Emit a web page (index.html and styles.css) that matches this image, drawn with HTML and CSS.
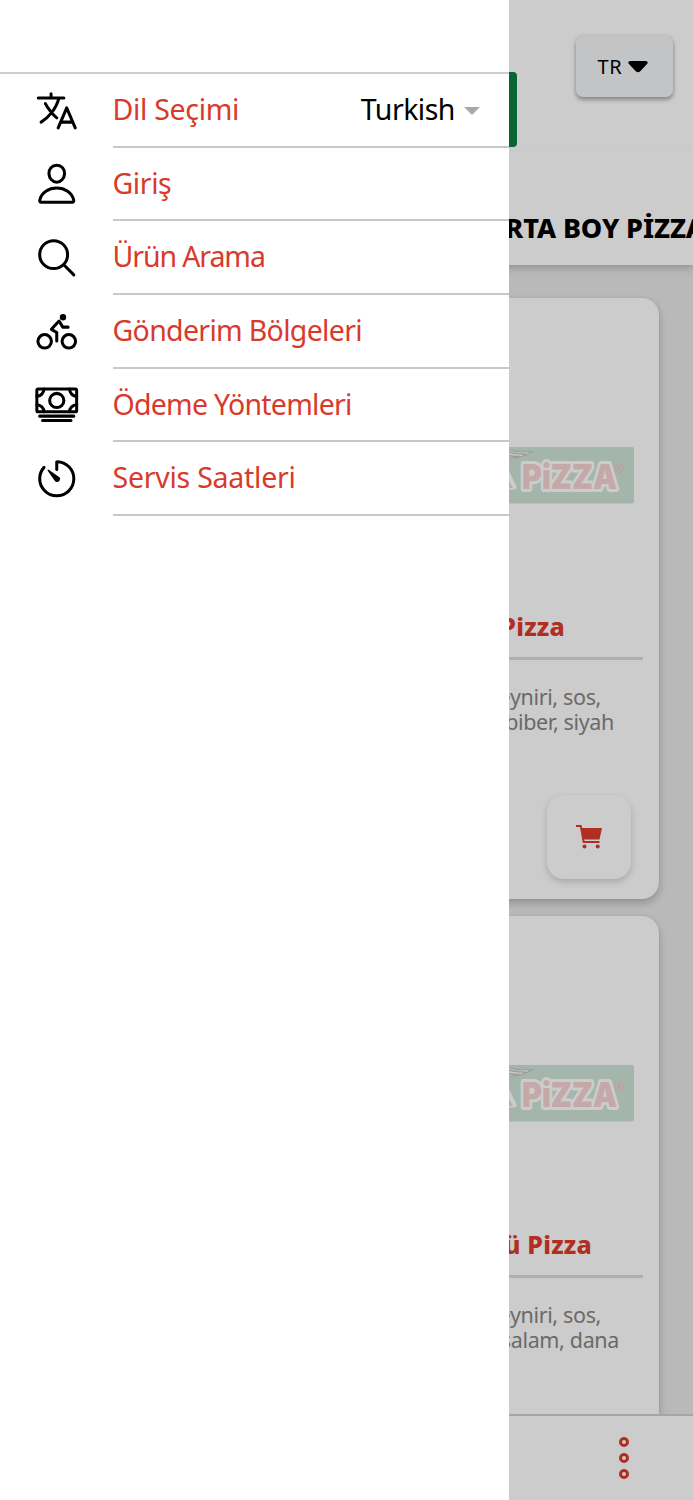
FILE: index.html
```html
<!DOCTYPE html>
<html lang="tr">
<head>
<meta charset="utf-8">
<title>Menü</title>
<link rel="stylesheet" href="styles.css">
</head>
<body>
<div class="app">
  <div class="page">
    <header class="header">
      <div class="brand"></div>
      <button class="lang">TR <svg width="20" height="12" viewBox="0 0 20 12"><path d="M2 0h16q3 1 1 3l-7 7.500q-2 1.500-4 0L1 3Q-1 1 2 0z"/></svg></button>
    </header>
    <nav class="tabs"><span>ORTA BOY PİZZALAR</span></nav>
    <main class="list">
      <article class="card">
        <div class="photo"><svg class="logo" width="134" height="57" viewBox="0 0 134 57"><rect class="logo-bg" x="-10" width="144" height="56.500" rx="2"/><path class="logo-out" d="M-4 13H1L14 40H-4z"/><path class="logo-in" d="M-4 17H0L13 41H-4z"/><path class="wing" d="M0 0H5Q13 6 32 4.500Q20 13 0 11M0 2Q13 8 26 7M0 6Q13 11 20 9"/><text class="logo-text" x="22" y="42" textLength="95" lengthAdjust="spacingAndGlyphs">PiZZA</text><text class="reg" x="114" y="26">®</text></svg></div>
        <h2 class="t1">Pizza</h2>
        <p><span class="a">eyniri, sos,</span><span class="b">biber, siyah</span></p>
        <div class="cart"><svg width="26" height="24" viewBox="0 0 26 24"><path d="M0 0h5.500l.7 3H26l-2.500 11.500H8.200l.3 1.500h15v2H6.800L4 2H0z"/><circle cx="8.500" cy="21.500" r="2"/><circle cx="21.700" cy="21.500" r="2"/></svg></div>
      </article>
      <article class="card">
        <div class="photo"><svg class="logo" width="134" height="57" viewBox="0 0 134 57"><rect class="logo-bg" x="-10" width="144" height="56.500" rx="2"/><path class="logo-out" d="M-4 13H1L14 40H-4z"/><path class="logo-in" d="M-4 17H0L13 41H-4z"/><path class="wing" d="M0 0H5Q13 6 32 4.500Q20 13 0 11M0 2Q13 8 26 7M0 6Q13 11 20 9"/><text class="logo-text" x="22" y="42" textLength="95" lengthAdjust="spacingAndGlyphs">PiZZA</text><text class="reg" x="114" y="26">®</text></svg></div>
        <h2 class="t2">ü Pizza</h2>
        <p><span class="a">eyniri, sos,</span><span class="c">salam, dana</span></p>
      </article>
    </main>
    <footer class="bottom"><i></i><i></i><i></i></footer>
  </div>
  <div class="shade"></div>
  <aside class="drawer">
    <div class="row">
      <svg class="icon" viewBox="0 0 512 512"><path d="M48 112h288M192 64v48M272 448l96-224 96 224M301.500 384h133M281.300 112S257 206 199 277 80 384 80 384M256 336s-35-27-72-75-56-85-56-85"/></svg>
      <div class="label"><span class="w1">Dil Seçimi</span><span class="value">Turkish</span><b class="caret"></b></div>
    </div>
    <div class="row">
      <svg class="icon" viewBox="0 0 512 512"><path d="M344 144c-3.920 52.870-44 96-88 96s-84.150-43.120-88-96c-4-55 35-96 88-96s92 42 88 96zM256 304c-87 0-175.300 48-191.640 138.600C62.390 453.520 68.570 464 80 464h352c11.440 0 17.620-10.480 15.650-21.400C431.300 352 343 304 256 304z"/></svg>
      <div class="label"><span class="w2">Giriş</span></div>
    </div>
    <div class="row">
      <svg class="icon" viewBox="0 0 512 512"><circle cx="221" cy="221" r="157"/><path d="M338 338L448 448"/></svg>
      <div class="label"><span class="w3">Ürün Arama</span></div>
    </div>
    <div class="row">
      <svg class="icon" viewBox="0 0 512 512"><circle cx="392" cy="364" r="76"/><circle cx="120" cy="364" r="76"/><path d="M256 360V264L196 229L282 135L324 204H384"/><circle class="solid" cx="326" cy="93" r="36"/></svg>
      <div class="label"><span class="w4">Gönderim Bölgeleri</span></div>
    </div>
    <div class="row">
      <svg class="icon" viewBox="0 0 512 512"><rect x="32" y="80" width="448" height="256" rx="16"/><path d="M64 384h384M96 432h320M480 160a80 80 0 01-80-80M32 160a80 80 0 0080-80M480 256a80 80 0 00-80 80M32 256a80 80 0 0180 80"/><circle cx="256" cy="208" r="80"/></svg>
      <div class="label"><span class="w5">Ödeme Yöntemleri</span></div>
    </div>
    <div class="row">
      <svg class="icon" viewBox="0 0 512 512"><path d="M112.910 128A191.850 191.850 0 0064 254c-1.180 106.350 85.650 193.800 192 194 106.200.2 192-85.830 192-192 0-104.540-83.550-189.610-187.500-192a4.360 4.360 0 00-4.500 4.370V152"/><path class="solid" d="M233.380 278.630l-79-113a8.130 8.130 0 0111.320-11.320l113 79a32.500 32.500 0 01-37.250 53.260 33.210 33.210 0 01-8.070-7.940z"/></svg>
      <div class="label"><span class="w6">Servis Saatleri</span></div>
    </div>
  </aside>
</div>
</body>
</html>
```
FILE: styles.css
```css
* { box-sizing: border-box; }
body { margin: 0; font-family: "Noto Sans", "Open Sans", sans-serif; }
.app { position: relative; width: 693px; height: 1500px; overflow: hidden; }
.page { height: 1500px; display: flex; flex-direction: column; background: #e8e8e8; }
.header { height: 152px; flex: none; display: flex; background: #fff; border-bottom: 1px solid #fcfcfc; position: relative; z-index: 1; }
.brand { width: 339px; height: 75px; margin: 72px 59px 0 178px; border-radius: 4px; background: #0a7d3f; }
.lang { width: 97px; height: 61px; margin: 36px 0 0; padding: 0 4px 0 0; border: 0; border-radius: 7px; background: #f4f5f8; box-shadow: 0 3px 4px rgba(0,0,0,.3), 0 0 4px rgba(0,0,0,.12); font: 20px "Noto Sans", sans-serif; letter-spacing: .8px; color: #000; display: flex; align-items: center; justify-content: center; gap: 5px; }
.tabs { height: 113px; flex: none; padding: 56px 0 0 484px; background: #fff; box-shadow: 0 2px 9px rgba(0,0,0,.25); font-size: 27px; font-weight: 800; line-height: 40px; letter-spacing: -.1px; white-space: nowrap; overflow: hidden; position: relative; }
.list { flex: 1; min-height: 0; overflow: hidden; padding: 33px 34px 0; display: flex; flex-direction: column; gap: 17px; }
.card { height: 601px; flex: none; background: #fff; border-radius: 17px; box-shadow: 0 4px 9px rgba(0,0,0,.22), 0 0 3px rgba(0,0,0,.06); display: flex; flex-direction: column; }
.photo { height: 299px; flex: none; padding: 149px 25px 0 0; display: flex; justify-content: flex-end; align-items: flex-start; }
.logo { overflow: hidden; display: block; }
.logo-bg { fill: #cee4d7; }
.logo-out { fill: #fff; stroke: #fff; stroke-width: 5; stroke-linejoin: round; }
.logo-in { fill: #f7d2d2; }
.wing { fill: #fff; stroke: #c4c4c4; stroke-width: 1.200; }
.logo-text { font: 900 34px Inter, sans-serif; fill: #f7d2d2; stroke: #fff; stroke-width: 6; paint-order: stroke; stroke-linejoin: round; }
.reg { font: 13px "Noto Sans", sans-serif; fill: #f0c4c4; }
h2 { height: 63px; margin: 0 16px 0 17px; border-bottom: 3px solid #dedbd9; color: #dc3a2b; font-size: 25px; font-weight: 800; line-height: 59px; letter-spacing: .2px; text-align: right; flex: none; }
.t1 { padding-right: 78px; }
.t2 { padding-right: 51px; }
p { margin: 24px 0 0; display: flex; flex-direction: column; color: #858585; font-size: 21.500px; line-height: 25px; letter-spacing: -.35px; text-align: right; white-space: nowrap; }
.a { padding-right: 58px; }
.b { padding-right: 45px; }
.c { padding-right: 40px; }
.cart { width: 84px; height: 84px; margin: auto 28px 20px auto; border-radius: 17px; box-shadow: 0 3px 7px rgba(0,0,0,.18); display: flex; align-items: center; justify-content: center; fill: #dc3a2b; }
.bottom { height: 86px; flex: none; padding: 21px 0 0 619px; background: #fff; border-top: 2px solid #cfcfcf; display: flex; flex-direction: column; gap: 6px; position: relative; }
.bottom i { width: 10px; height: 10px; border: 3px solid #dc3a2b; border-radius: 50%; }
.shade { position: absolute; z-index: 2; inset: 0; background: rgba(0,0,0,.2); }
.drawer { position: absolute; z-index: 3; top: 0; left: 0; width: 509px; height: 1500px; padding-top: 72px; background: #fff; }
.drawer::before { content: ""; display: block; height: 2px; background: #cececf; }
.row { height: 73.670px; padding-left: 33.500px; display: flex; }
.icon { width: 45.500px; height: 45.500px; margin: 13.600px 33.500px 0 0; fill: none; stroke: #000; stroke-width: 34; stroke-linecap: round; stroke-linejoin: round; flex: none; }
.solid { fill: #000; stroke: none; }
.label { flex: 1; height: 73.670px; display: flex; border-bottom: 2px solid #c8c8cb; color: #d83a2b; font-size: 28.500px; line-height: 71px; white-space: nowrap; }
.w1 { letter-spacing: -.3px; }
.w2 { letter-spacing: -.4px; }
.w3 { letter-spacing: -1.100px; }
.w4 { letter-spacing: -.68px; }
.w5 { letter-spacing: -.75px; }
.w6 { letter-spacing: -.25px; }
.value { margin-left: auto; color: #000; letter-spacing: -.5px; }
.caret { margin: 33px 29px 0 9px; width: 0; height: 0; border: 8.500px solid transparent; border-top-color: #aaa; border-bottom: 0; }
```
